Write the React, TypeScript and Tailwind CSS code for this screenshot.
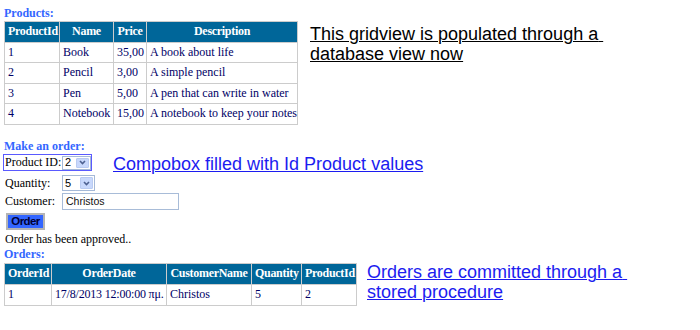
import React from "react";

type Col = { label: string; width: string };

const PRODUCT_COLS: Col[] = [
  { label: "ProductId", width: "w-[55px]" },
  { label: "Name", width: "w-[54px]" },
  { label: "Price", width: "w-[33px]" },
  { label: "Description", width: "w-[151px]" },
];

const ORDER_COLS: Col[] = [
  { label: "OrderId", width: "w-[47px]" },
  { label: "OrderDate", width: "w-[115px]" },
  { label: "CustomerName", width: "w-[85px]" },
  { label: "Quantity", width: "w-[50px]" },
  { label: "ProductId", width: "w-[55px]" },
];

const products = [
  ["1", "Book", "35,00", "A book about life"],
  ["2", "Pencil", "3,00", "A simple pencil"],
  ["3", "Pen", "5,00", "A pen that can write in water"],
  ["4", "Notebook", "15,00", "A notebook to keep your notes"],
];

const orders = [["1", "17/8/2013 12:00:00 πμ.", "Christos", "5", "2"]];

const sans = "font-['Liberation_Sans',Arial,sans-serif]";

function GridView({ cols, rows, width }: { cols: Col[]; rows: string[][]; width: string }) {
  return (
    <table className={`table-fixed border-collapse border border-[#cccccc] bg-white text-[12px] ${width}`}>
      <colgroup>
        {cols.map((c) => (
          <col key={c.label} className={c.width} />
        ))}
      </colgroup>
      <thead>
        <tr>
          {cols.map((c) => (
            <th
              key={c.label}
              className="whitespace-nowrap border border-[#cccccc] bg-[#006699] px-[3px] py-[3px] text-center font-bold leading-[13.6px] tracking-[-0.3px] text-white"
            >
              {c.label}
            </th>
          ))}
        </tr>
      </thead>
      <tbody>
        {rows.map((r, i) => (
          <tr key={i}>
            {r.map((cell, j) => (
              <td
                key={j}
                className={`whitespace-nowrap border border-[#cccccc] px-[3px] py-[3px] text-left leading-[13.6px] text-[#000066] ${
                  cell.includes("πμ") ? "tracking-[-0.2px]" : ""
                }`}
              >
                {cell}
              </td>
            ))}
          </tr>
        ))}
      </tbody>
    </table>
  );
}

function Combo({ value, size }: { value: string; size: string }) {
  return (
    <div className={`flex items-stretch border border-[#a5b9d8] bg-white p-[1px] ${size}`}>
      <span className={`flex flex-1 items-center pl-[1px] text-[11px] leading-none text-black ${sans}`}>{value}</span>
      <span className="flex w-[13px] items-center justify-center rounded-[1px] border border-[#b9cbf2] bg-[#c8d8fc]">
        <svg width="7" height="5" viewBox="0 0 7 5">
          <path d="M1 1l2.5 2.5L6 1" stroke="#4d6191" strokeWidth="1.6" fill="none" />
        </svg>
      </span>
    </div>
  );
}

const note = `${sans} text-[18px] leading-[20px] underline decoration-1`;

export default function App() {
  return (
    <div className="h-[330px] w-[700px] overflow-hidden bg-white pl-[4px] pt-[6px] font-['Liberation_Serif','Times_New_Roman',serif] text-[12px] text-black">
      <div className="flex items-start">
        <div>
          <div className="font-bold leading-[15px] text-[#3366ff]">Products:</div>
          <GridView cols={PRODUCT_COLS} rows={products} width="w-[293px]" />
        </div>
        <p className={`ml-[12px] mt-[18px] text-black ${note}`}>
          This gridview is populated through a{"\u00a0"}
          <br />
          database view now
        </p>
      </div>

      <div className="mt-[14.5px] font-bold leading-[15px] text-[#3366ff]">Make an order:</div>

      <div className="flex h-[17px] items-start">
        <div className="-ml-[1px] flex h-[17px] items-center border border-[#5a5aff]">
          <label className="w-[58px] pl-[1px] leading-[15px]">Product ID:</label>
          <Combo value="2" size="h-[14px] w-[29px]" />
        </div>
        <a href="#" className={`ml-[21px] text-[#1c1cf0] ${note}`}>
          Compobox filled with Id Product values
        </a>
      </div>

      <div className="mt-[4px] flex h-[16px] items-center">
        <label className="w-[58px] pl-[1px] leading-[15px]">Quantity:</label>
        <Combo value="5" size="h-[16px] w-[33px]" />
      </div>

      <div className="mt-[2px] flex h-[17px] items-center">
        <label className="w-[58px] pl-[1px] leading-[15px]">Customer:</label>
        <div className={`flex h-[17px] w-[117px] items-center border border-[#a8bcd8] bg-white pl-[3px] text-[10.5px] text-[#111] ${sans}`}>
          Christos
        </div>
      </div>

      <button
        type="button"
        className={`ml-[2px] mt-[3px] flex h-[17px] w-[39px] items-center justify-center border-2 border-[#b4b4b4] bg-[#3366ff] text-[11.5px] font-bold tracking-[-0.6px] text-[#000033] ${sans}`}
      >
        Order
      </button>

      <div className="mt-[2px] pl-[1px] leading-[14px]">Order has been approved..</div>
      <div className="mt-[1px] font-bold leading-[14px] text-[#3366ff]">Orders:</div>

      <div className="mt-[2px] flex items-start">
        <GridView cols={ORDER_COLS} rows={orders} width="w-[352px]" />
        <a href="#" className={`-mt-[1px] ml-[10px] text-[#1c1cf0] ${note}`}>
          Orders are committed through a{"\u00a0"}
          <br />
          stored procedure
        </a>
      </div>
    </div>
  );
}
